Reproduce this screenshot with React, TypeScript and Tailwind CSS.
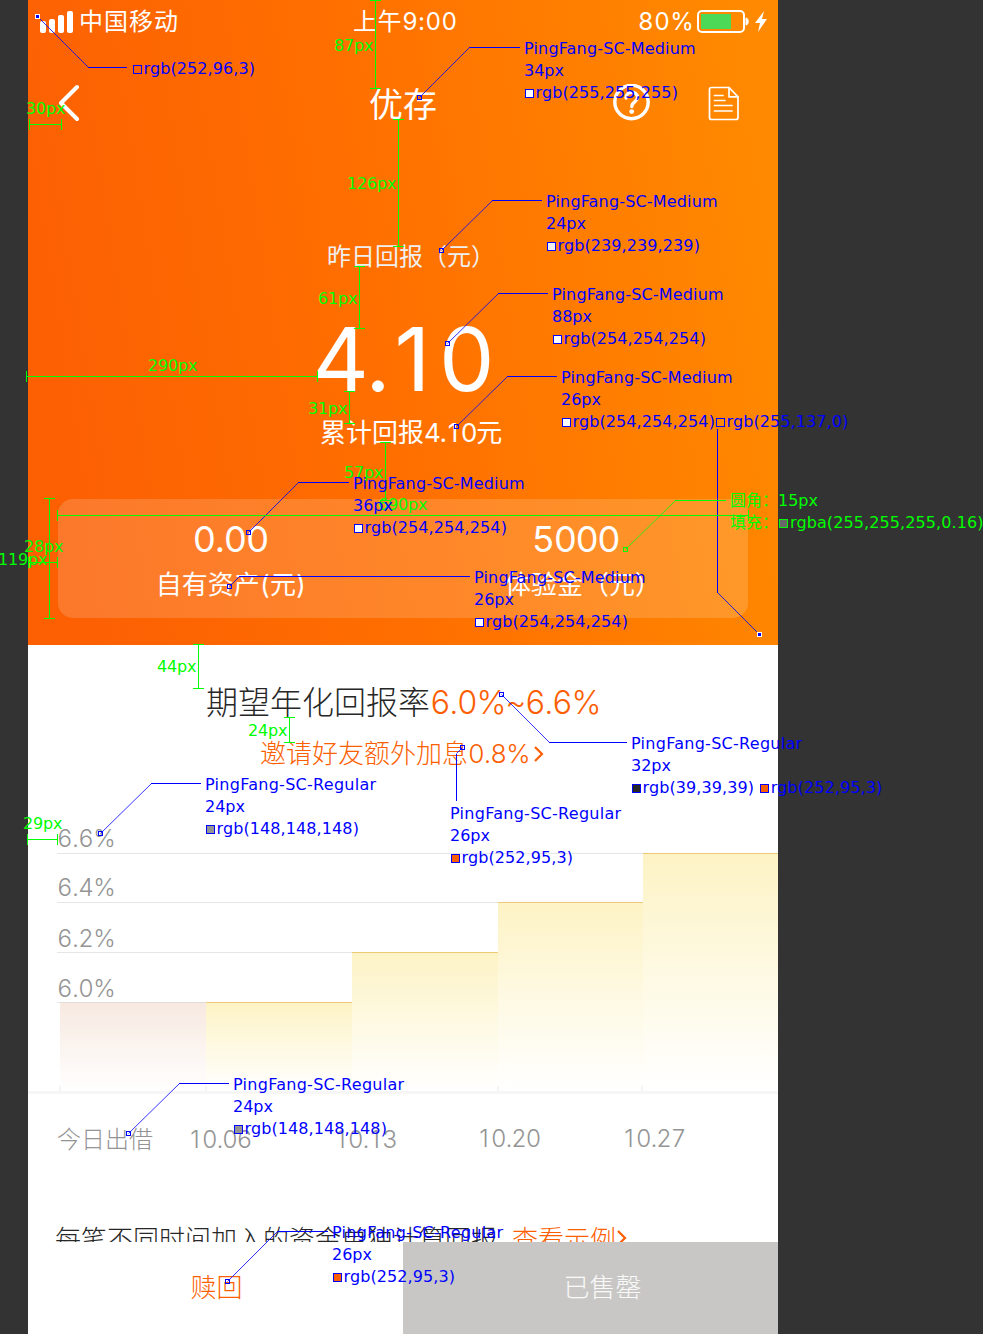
import React from "react";

const UI = "font-['Inter','Noto_Sans_CJK_SC',sans-serif] tabular-nums";

/* Footless "1" set on the same advance as the tabular figures. */
function One() {
  return <span className="inline-block w-[0.585em] text-center proportional-nums tracking-[0px]">1</span>;
}

function StatusBar() {
  return (
    <div className="flex h-[43px] items-center pl-[12px] text-white">
      <svg width="34" height="22" viewBox="0 0 34 22" className="shrink-0" fill="currentColor">
        <rect x="0" y="10" width="6" height="12" rx="2" />
        <rect x="9" y="8" width="6" height="14" rx="2" />
        <rect x="18" y="4" width="6" height="18" rx="2" />
        <rect x="27" y="0" width="6" height="22" rx="2" />
      </svg>
      <span className="ml-[5px] w-[274px] whitespace-nowrap text-[24px] leading-[43px] tracking-[1px]">中国移动</span>
      <span className="w-[285px] whitespace-nowrap text-[24px] font-[370] leading-[43px] tracking-[0.6px]">
        <span className="font-normal">上午</span>9:00
      </span>
      <span className="w-[59px] whitespace-nowrap text-[24px] font-[370] leading-[43px] tracking-[0.6px]">80%</span>
      <svg width="72" height="24" viewBox="0 0 72 24" className="shrink-0">
        <rect x="1" y="1" width="46" height="21" rx="4" fill="none" stroke="#fff" strokeWidth="2" />
        <rect x="4" y="4" width="30" height="15" fill="#4cd957" />
        <path d="M49 8 C52 8 52 15 49 15 Z" fill="#fff" stroke="#fff" />
        <path d="M67 1 L58 13 H63 L61 22 L70 9 H65 Z" fill="#fff" />
      </svg>
    </div>
  );
}

function NavBar() {
  return (
    <div className="mt-[10px] flex h-[62px] items-start pt-[31px] text-white">
      <svg width="22" height="38" viewBox="0 0 22 38" className="ml-[31px] shrink-0" fill="none" stroke="currentColor" strokeWidth="4" strokeLinecap="round" strokeLinejoin="round">
        <path d="M18 3 L2 19 L18 35" />
      </svg>
      <span className="ml-[288px] w-[244px] text-[34px] leading-[42px]">优存</span>
      <svg width="38" height="38" viewBox="0 0 38 38" className="shrink-0" fill="none" stroke="currentColor">
        <circle cx="18.5" cy="18" r="16.7" strokeWidth="3.4" />
        <path d="M13 14 C13 6.500 24.500 6.500 24.500 13.500 C24.500 18 18.800 17.800 18.800 22.500" strokeWidth="3.400" strokeLinecap="round" />
        <circle cx="18.700" cy="27.600" r="2.400" fill="currentColor" stroke="none" />
      </svg>
      <svg width="32" height="36" viewBox="0 0 32 36" className="ml-[57px] mt-[2px] shrink-0" fill="none" stroke="currentColor" strokeWidth="1.700" strokeLinejoin="round" strokeLinecap="round">
        <path d="M3.500 1.500 H21 L30 10.800 V31.500 Q30 33.500 28 33.500 H3.500 Q1.500 33.500 1.500 31.500 V3.500 Q1.500 1.500 3.500 1.500 Z" />
        <path d="M21 1.500 V10.800 H30" />
        <path d="M6.500 9.500 H15 M6.500 14.500 H17 M6.500 19.500 H24 M6.500 25 H24" />
      </svg>
    </div>
  );
}

function Hero() {
  return (
    <section className="h-[645px] shrink-0 overflow-hidden bg-[linear-gradient(81deg,#fc6003_8%,#ff6f00_47%,#ff8900_95%)]">
      <StatusBar />
      <NavBar />
      <div className="mt-[127px] h-[30px] whitespace-nowrap pl-[299px] text-[24px] leading-[30px] text-[#efefef]">昨日回报（元）</div>
      <div className="mt-[37px] h-[100px] whitespace-nowrap pl-[284px] text-[88px] font-[370] leading-[100px] tracking-[-3px] text-[#fefefe]">
        4.<One />0
      </div>
      <div className="mt-[8px] h-[32px] whitespace-nowrap pl-[292px] text-[26px] leading-[32px] text-[#fefefe]">
        累计回报<span className="tracking-[-1.2px]">4.<One />0</span>元
      </div>
      <div className="mx-[30px] mt-[50px] grid h-[119px] grid-cols-2 rounded-[15px] bg-white/16 text-[#fefefe]">
        <div className="flex flex-col items-center pt-[20px]">
          <span className="text-[36px] font-[370] leading-[40px] tracking-[-1px]">0.00</span>
          <span className="mt-[7px] whitespace-nowrap pl-[1px] text-[26px] leading-[38px]">自有资产(元)</span>
        </div>
        <div className="flex flex-col items-center pt-[20px]">
          <span className="text-[36px] font-[370] leading-[40px] tracking-[-1.5px]">5000</span>
          <span className="mt-[7px] whitespace-nowrap pl-[15px] text-[26px] leading-[38px]">体验金（元）</span>
        </div>
      </div>
    </section>
  );
}

const gridRows = [
  { label: "6.6%", box: "h-[30px] w-[721px] leading-[29px] pt-px" },
  { label: "6.4%", box: "h-[49px] w-[594px] leading-[28px]" },
  { label: "6.2%", box: "h-[50px] w-[594px] leading-[26px]" },
  { label: "6.0%", box: "h-[50px] w-[594px] leading-[26px]" },
];
const ticks = ["ml-[31px]", "ml-[144px]", "ml-[290px]", "ml-[142px]"];

function Chart() {
  return (
    <div className="grid h-[270px] w-[750px] shrink-0">
      <div className="col-start-1 row-start-1 flex flex-col pl-[29px] text-[24px] font-light tracking-[-0.4px] text-[#949494]">
        {gridRows.map((row) => (
          <div key={row.label} className={"flex items-end border-b border-[#e6e6e6] " + row.box}>
            {row.label}
          </div>
        ))}
      </div>
      <div className="col-start-1 row-start-1 flex items-end pb-[3px] pl-[32px]">
        <div className="h-[89px] w-[146px] border-t border-[#e0dcda] bg-linear-to-b from-[#f7e9e0] to-white" />
        <div className="h-[89px] w-[146px] border-t border-[#efc878] bg-linear-to-b from-[#fdf3c5] to-white" />
        <div className="h-[139px] w-[146px] border-t border-[#efc878] bg-linear-to-b from-[#fdf3c5] to-white" />
        <div className="h-[189px] w-[145px] border-t border-[#efc878] bg-linear-to-b from-[#fdf3c5] to-white" />
        <div className="h-[238px] w-[135px] border-t border-[#efc878] bg-linear-to-b from-[#fdf3c5] to-white" />
      </div>
      <div className="col-start-1 row-start-1 flex flex-col justify-end">
        <div className="flex h-[5px]">
          {ticks.map((offset) => (
            <div key={offset} className={"w-[2px] bg-[#f4f4f4] " + offset} />
          ))}
        </div>
        <div className="h-[3px] bg-[#f6f6f6]" />
      </div>
    </div>
  );
}

function Chevron({ className }: { className: string }) {
  return (
    <svg width="12" height="18" viewBox="0 0 12 18" className={className} fill="none" stroke="#fc5f03" strokeWidth="2.200">
      <path d="M2 2 L9 9 L2 16" />
    </svg>
  );
}

function Phone() {
  return (
    <main className={"ml-[28px] flex h-[1334px] w-[750px] flex-col overflow-hidden bg-white " + UI}>
      <Hero />
      <h1 className="mt-[37px] h-[42px] shrink-0 whitespace-nowrap pl-[178px] text-[32px] font-light leading-[42px] text-[#272727]">
        期望年化回报率<span className="tracking-[-1.15px] text-[#fc5f03]">6.0%~6.6%</span>
      </h1>
      <div className="mt-[14px] flex h-[32px] shrink-0 items-center whitespace-nowrap pl-[232px] text-[26px] font-light leading-[32px] text-[#fc5f03]">
        邀请好友额外加息<span className="tracking-[-0.8px]">0.8%</span>
        <Chevron className="ml-[3px]" />
      </div>
      <div className="h-[54px] shrink-0" />
      <Chart />
      <div className="mt-[31px] flex h-[30px] shrink-0 whitespace-nowrap pl-[28px] text-[24px] font-light leading-[30px] tracking-[-0.9px] text-[#949494]">
        <span className="w-[132px] pl-px tracking-[0px]">今日出借</span>
        <span className="w-[146px]"><One />0.06</span>
        <span className="w-[143px]"><One />0.<One />3</span>
        <span className="-mt-px w-[145px]"><One />0.20</span>
        <span className="-mt-px"><One />0.27</span>
      </div>
      <div className="mt-[70px] flex h-[17px] shrink-0 items-start overflow-hidden whitespace-nowrap pl-[27px] text-[26px] font-light leading-[30px] text-[#272727]">
        <span className="w-[457px]">每笔不同时间加入的资金单独计算回报</span>
        <span className="text-[#fc5f03]">查看示例</span>
        <Chevron className="mt-[4px] shrink-0" />
      </div>
      <div className="grid h-[92px] shrink-0 grid-cols-2 text-center text-[26px] font-light leading-[92px]">
        <div className="bg-white pl-[2px] text-[#fc5f03]">赎回</div>
        <div className="bg-[#c8c7c5] pl-[24px] text-white/90">已售罄</div>
      </div>
    </main>
  );
}

/* Specification callouts: marker, elbow and end point of every leader line. */
const leaders: number[][] = [
  [37, 16, 88, 67, 127, 67],
  [419, 97, 469, 47, 520, 47],
  [441, 250, 492, 200, 542, 200],
  [447, 343, 498, 293, 548, 293],
  [456, 426, 507, 376, 557, 376],
  [759, 634, 717, 592, 717, 428],
  [248, 532, 298, 482, 349, 482],
  [229, 586, 239, 576, 470, 576],
  [501, 694, 549, 742, 627, 742],
  [100, 833, 151, 783, 201, 783],
  [462, 747, 456, 753, 456, 800],
  [128, 1133, 179, 1083, 229, 1083],
  [227, 1281, 277, 1231, 328, 1231],
];

/* Dimension lines: x1, y1, x2, y2. */
const dimensions: number[][] = [
  [375, 0, 375, 88],
  [398, 119, 398, 246],
  [29, 124, 61, 124],
  [359, 266, 359, 328],
  [26, 376, 317, 376],
  [349, 391, 349, 423],
  [385, 442, 385, 500],
  [57, 515, 748, 515],
  [49, 498, 49, 618],
  [28, 562, 57, 562],
  [198, 644, 198, 688],
  [289, 717, 289, 742],
  [27, 839, 57, 839],
];

const dimensionLabels: [number, number, string][] = [
  [334, 45, "87px"],
  [347, 183, "126px"],
  [26, 108, "30px"],
  [318, 298, "61px"],
  [148, 365, "290px"],
  [308, 408, "31px"],
  [344, 472, "57px"],
  [378, 504, "690px"],
  [-2, 559, "119px"],
  [24, 546, "28px"],
  [157, 666, "44px"],
  [248, 730, "24px"],
  [23, 823, "29px"],
];

type Note = { x: number; y: number; font?: string; size?: string; wide?: boolean; colors: [string, string][] };

const M = "PingFang-SC-Medium";
const R = "PingFang-SC-Regular";
const notes: Note[] = [
  { x: 132, y: 68, colors: [["#fc6003", "rgb(252,96,3)"]] },
  { x: 524, y: 48, font: M, size: "34px", colors: [["#ffffff", "rgb(255,255,255)"]] },
  { x: 546, y: 201, font: M, size: "24px", colors: [["#efefef", "rgb(239,239,239)"]] },
  { x: 552, y: 294, font: M, size: "88px", colors: [["#fefefe", "rgb(254,254,254)"]] },
  { x: 561, y: 377, font: M, size: "26px", colors: [["#fefefe", "rgb(254,254,254)"], ["#ff8900", "rgb(255,137,0)"]] },
  { x: 353, y: 483, font: M, size: "36px", colors: [["#fefefe", "rgb(254,254,254)"]] },
  { x: 474, y: 577, font: M, size: "26px", colors: [["#fefefe", "rgb(254,254,254)"]] },
  { x: 631, y: 743, font: R, size: "32px", wide: true, colors: [["#272727", "rgb(39,39,39)"], ["#fc5f03", "rgb(252,95,3)"]] },
  { x: 205, y: 784, font: R, size: "24px", colors: [["#949494", "rgb(148,148,148)"]] },
  { x: 450, y: 813, font: R, size: "26px", colors: [["#fc5f03", "rgb(252,95,3)"]] },
  { x: 233, y: 1084, font: R, size: "24px", colors: [["#949494", "rgb(148,148,148)"]] },
  { x: 332, y: 1232, font: R, size: "26px", colors: [["#fc5f03", "rgb(252,95,3)"]] },
];

function Leader({ p, color }: { p: number[]; color: string }) {
  const [x, y, ex, ey, tx, ty] = p.map((v) => v + 0.5);
  return (
    <g stroke={color} fill="none">
      <path d={`M${x} ${y} L${ex} ${ey}`} strokeWidth="0.8" />
      <path d={`M${ex - (ey === ty ? 0.5 : 0)} ${ey} L${tx - (ey === ty ? 0.5 : 0)} ${ty}`} shapeRendering="crispEdges" />
      <rect x={x - 2} y={y - 2} width="4" height="4" shapeRendering="crispEdges" />
    </g>
  );
}

function Annotations() {
  return (
    <div className="pointer-events-none absolute inset-0 overflow-hidden whitespace-nowrap font-['DejaVu_Sans','Noto_Sans_CJK_SC',sans-serif] text-[16px] leading-[22px]">
      <svg className="absolute inset-0" width="983" height="1334" viewBox="0 0 983 1334">
        {leaders.map((p, i) => (
          <Leader key={i} p={p} color="#0000ff" />
        ))}
        {[[37, 16], [759, 634]].map(([x, y]) => (
          <g key={x} fill="none" shapeRendering="crispEdges">
            <rect x={x - 2} y={y - 2} width="5" height="5" fill="#0000ff" />
            <rect x={x - 1.5} y={y - 1.5} width="4" height="4" stroke="#fff" />
          </g>
        ))}
        <Leader p={[625, 549, 675, 500, 726, 500]} color="#00ff00" />
        <g stroke="#00ff00" shapeRendering="crispEdges" fill="none">
          {dimensions.map(([a, b, c, d], i) => {
            const x1 = a + 0.5, y1 = b + 0.5, x2 = c + 0.5, y2 = d + 0.5;
            return a === c ? (
              <path key={i} d={`M${x1} ${y1} V${y2} M${x1 - 5.5} ${y1} h11 M${x1 - 5.5} ${y2} h11`} />
            ) : (
              <path key={i} d={`M${x1} ${y1} H${x2} M${x1} ${y1 - 5.5} v11 M${x2} ${y1 - 5.5} v11`} />
            );
          })}
        </g>
      </svg>
      {dimensionLabels.map(([x, y, text]) => (
        <span key={text + y} className="absolute tracking-[-0.2px] text-[#00ff00]" style={{ left: x, top: y - 10 }}>
          {text}
        </span>
      ))}
      {notes.map((n, i) => (
        <div key={i} className="absolute text-[#0000ff]" style={{ left: n.x, top: n.y - 10 }}>
          {n.font && <div className={n.font === M ? "tracking-[0.17px]" : "tracking-[0.28px]"}>{n.font}</div>}
          {n.size && <div>{n.size}</div>}
          <div className={n.wide ? "flex gap-[5px]" : "flex"}>
            {n.colors.map(([fill, label]) => (
              <span key={label} className="flex items-center gap-[1.5px] tracking-[0.1px]">
                <i className="ml-px mt-px block h-[9px] w-[9px] border border-[#0000ff]" style={{ backgroundColor: fill }} />
                {label}
              </span>
            ))}
          </div>
        </div>
      ))}
      <div className="absolute left-[730px] top-[490px] text-[#00ff00]">
        <div className="flex">
          <span className="w-[48px]">圆角：</span>15px
        </div>
        <div className="flex items-center">
          <span className="w-[48px]">填充：</span>
          <i className="ml-px mr-[2px] mt-px block h-[9px] w-[9px] border border-[#00ff00] bg-[#686868]" />
          <span className="tracking-[0.1px]">rgba(255,255,255,0.16)</span>
        </div>
      </div>
    </div>
  );
}

export default function App() {
  return (
    <div className="relative h-[1334px] w-[983px] overflow-hidden bg-[#333333]">
      <Phone />
      <Annotations />
    </div>
  );
}
